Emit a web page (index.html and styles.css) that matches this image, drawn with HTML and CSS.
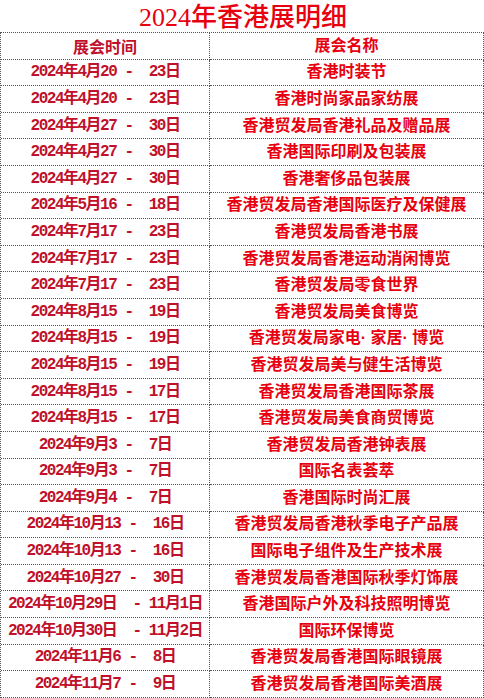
FILE: index.html
```html
<!DOCTYPE html>
<html lang="zh-CN">
<head>
<meta charset="utf-8">
<title>2024年香港展明细</title>
<link rel="stylesheet" href="styles.css">
</head>
<body>
<div class="page">
  <h1 class="title">2024年香港展明细</h1>
  <div class="sheet">
    <div class="cell date head">展会时间</div><div class="cell name head">展会名称</div>
    <div class="cell date">2024年4月20 -  23日</div><div class="cell name">香港时装节</div>
    <div class="cell date">2024年4月20 -  23日</div><div class="cell name">香港时尚家品家纺展</div>
    <div class="cell date">2024年4月27 -  30日</div><div class="cell name">香港贸发局香港礼品及赠品展</div>
    <div class="cell date">2024年4月27 -  30日</div><div class="cell name">香港国际印刷及包装展</div>
    <div class="cell date">2024年4月27 -  30日</div><div class="cell name">香港奢侈品包装展</div>
    <div class="cell date">2024年5月16 -  18日</div><div class="cell name">香港贸发局香港国际医疗及保健展</div>
    <div class="cell date">2024年7月17 -  23日</div><div class="cell name">香港贸发局香港书展</div>
    <div class="cell date">2024年7月17 -  23日</div><div class="cell name">香港贸发局香港运动消闲博览</div>
    <div class="cell date">2024年7月17 -  23日</div><div class="cell name">香港贸发局零食世界</div>
    <div class="cell date">2024年8月15 -  19日</div><div class="cell name">香港贸发局美食博览</div>
    <div class="cell date">2024年8月15 -  19日</div><div class="cell name">香港贸发局家电· 家居· 博览</div>
    <div class="cell date">2024年8月15 -  19日</div><div class="cell name">香港贸发局美与健生活博览</div>
    <div class="cell date">2024年8月15 -  17日</div><div class="cell name">香港贸发局香港国际茶展</div>
    <div class="cell date">2024年8月15 -  17日</div><div class="cell name">香港贸发局美食商贸博览</div>
    <div class="cell date">2024年9月3 -  7日</div><div class="cell name">香港贸发局香港钟表展</div>
    <div class="cell date">2024年9月3 -  7日</div><div class="cell name">国际名表荟萃</div>
    <div class="cell date">2024年9月4 -  7日</div><div class="cell name">香港国际时尚汇展</div>
    <div class="cell date">2024年10月13 -  16日</div><div class="cell name">香港贸发局香港秋季电子产品展</div>
    <div class="cell date">2024年10月13 -  16日</div><div class="cell name">国际电子组件及生产技术展</div>
    <div class="cell date">2024年10月27 -  30日</div><div class="cell name">香港贸发局香港国际秋季灯饰展</div>
    <div class="cell date">2024年10月29日  - 11月1日</div><div class="cell name">香港国际户外及科技照明博览</div>
    <div class="cell date">2024年10月30日  - 11月2日</div><div class="cell name">国际环保博览</div>
    <div class="cell date">2024年11月6 -  8日</div><div class="cell name">香港贸发局香港国际眼镜展</div>
    <div class="cell date">2024年11月7 -  9日</div><div class="cell name">香港贸发局香港国际美酒展</div>
  </div>
</div>
</body>
</html>
```
FILE: styles.css
```css
html, body {
  margin: 0;
  padding: 0;
  background: #ffffff;
}

.page {
  width: 484px;
  height: 698px;
  overflow: hidden;
}

.title {
  margin: 0;
  height: 32px;
  line-height: 35px;
  text-align: center;
  font-family: "Liberation Serif", "Noto Sans CJK SC", serif;
  font-size: 26px;
  font-weight: 500;
  color: #e8000f;
  padding-left: 2px;
}

.sheet {
  display: grid;
  grid-template-columns: 209px 274px;
  grid-template-rows: repeat(25, 26.6px);
  border-top: 1px dotted #555;
  border-left: 1px dotted #555;
  width: 484px;
  box-sizing: border-box;
}

.cell {
  display: flex;
  align-items: center;
  justify-content: center;
  border-right: 1px dotted #555;
  border-bottom: 1px dotted #555;
  box-sizing: border-box;
  white-space: pre;
  font-weight: 700;
  font-size: 16px;
  line-height: 1;
}

.date {
  font-family: "Liberation Mono", "Noto Sans CJK SC", monospace;
  letter-spacing: -1.5px;
  color: #c0102a;
}

.name {
  font-family: "Liberation Sans", "Noto Sans CJK SC", sans-serif;
  color: #e8000f;
}

.date.head {
  font-family: "Noto Sans CJK SC", sans-serif;
  letter-spacing: 0;
}
```
